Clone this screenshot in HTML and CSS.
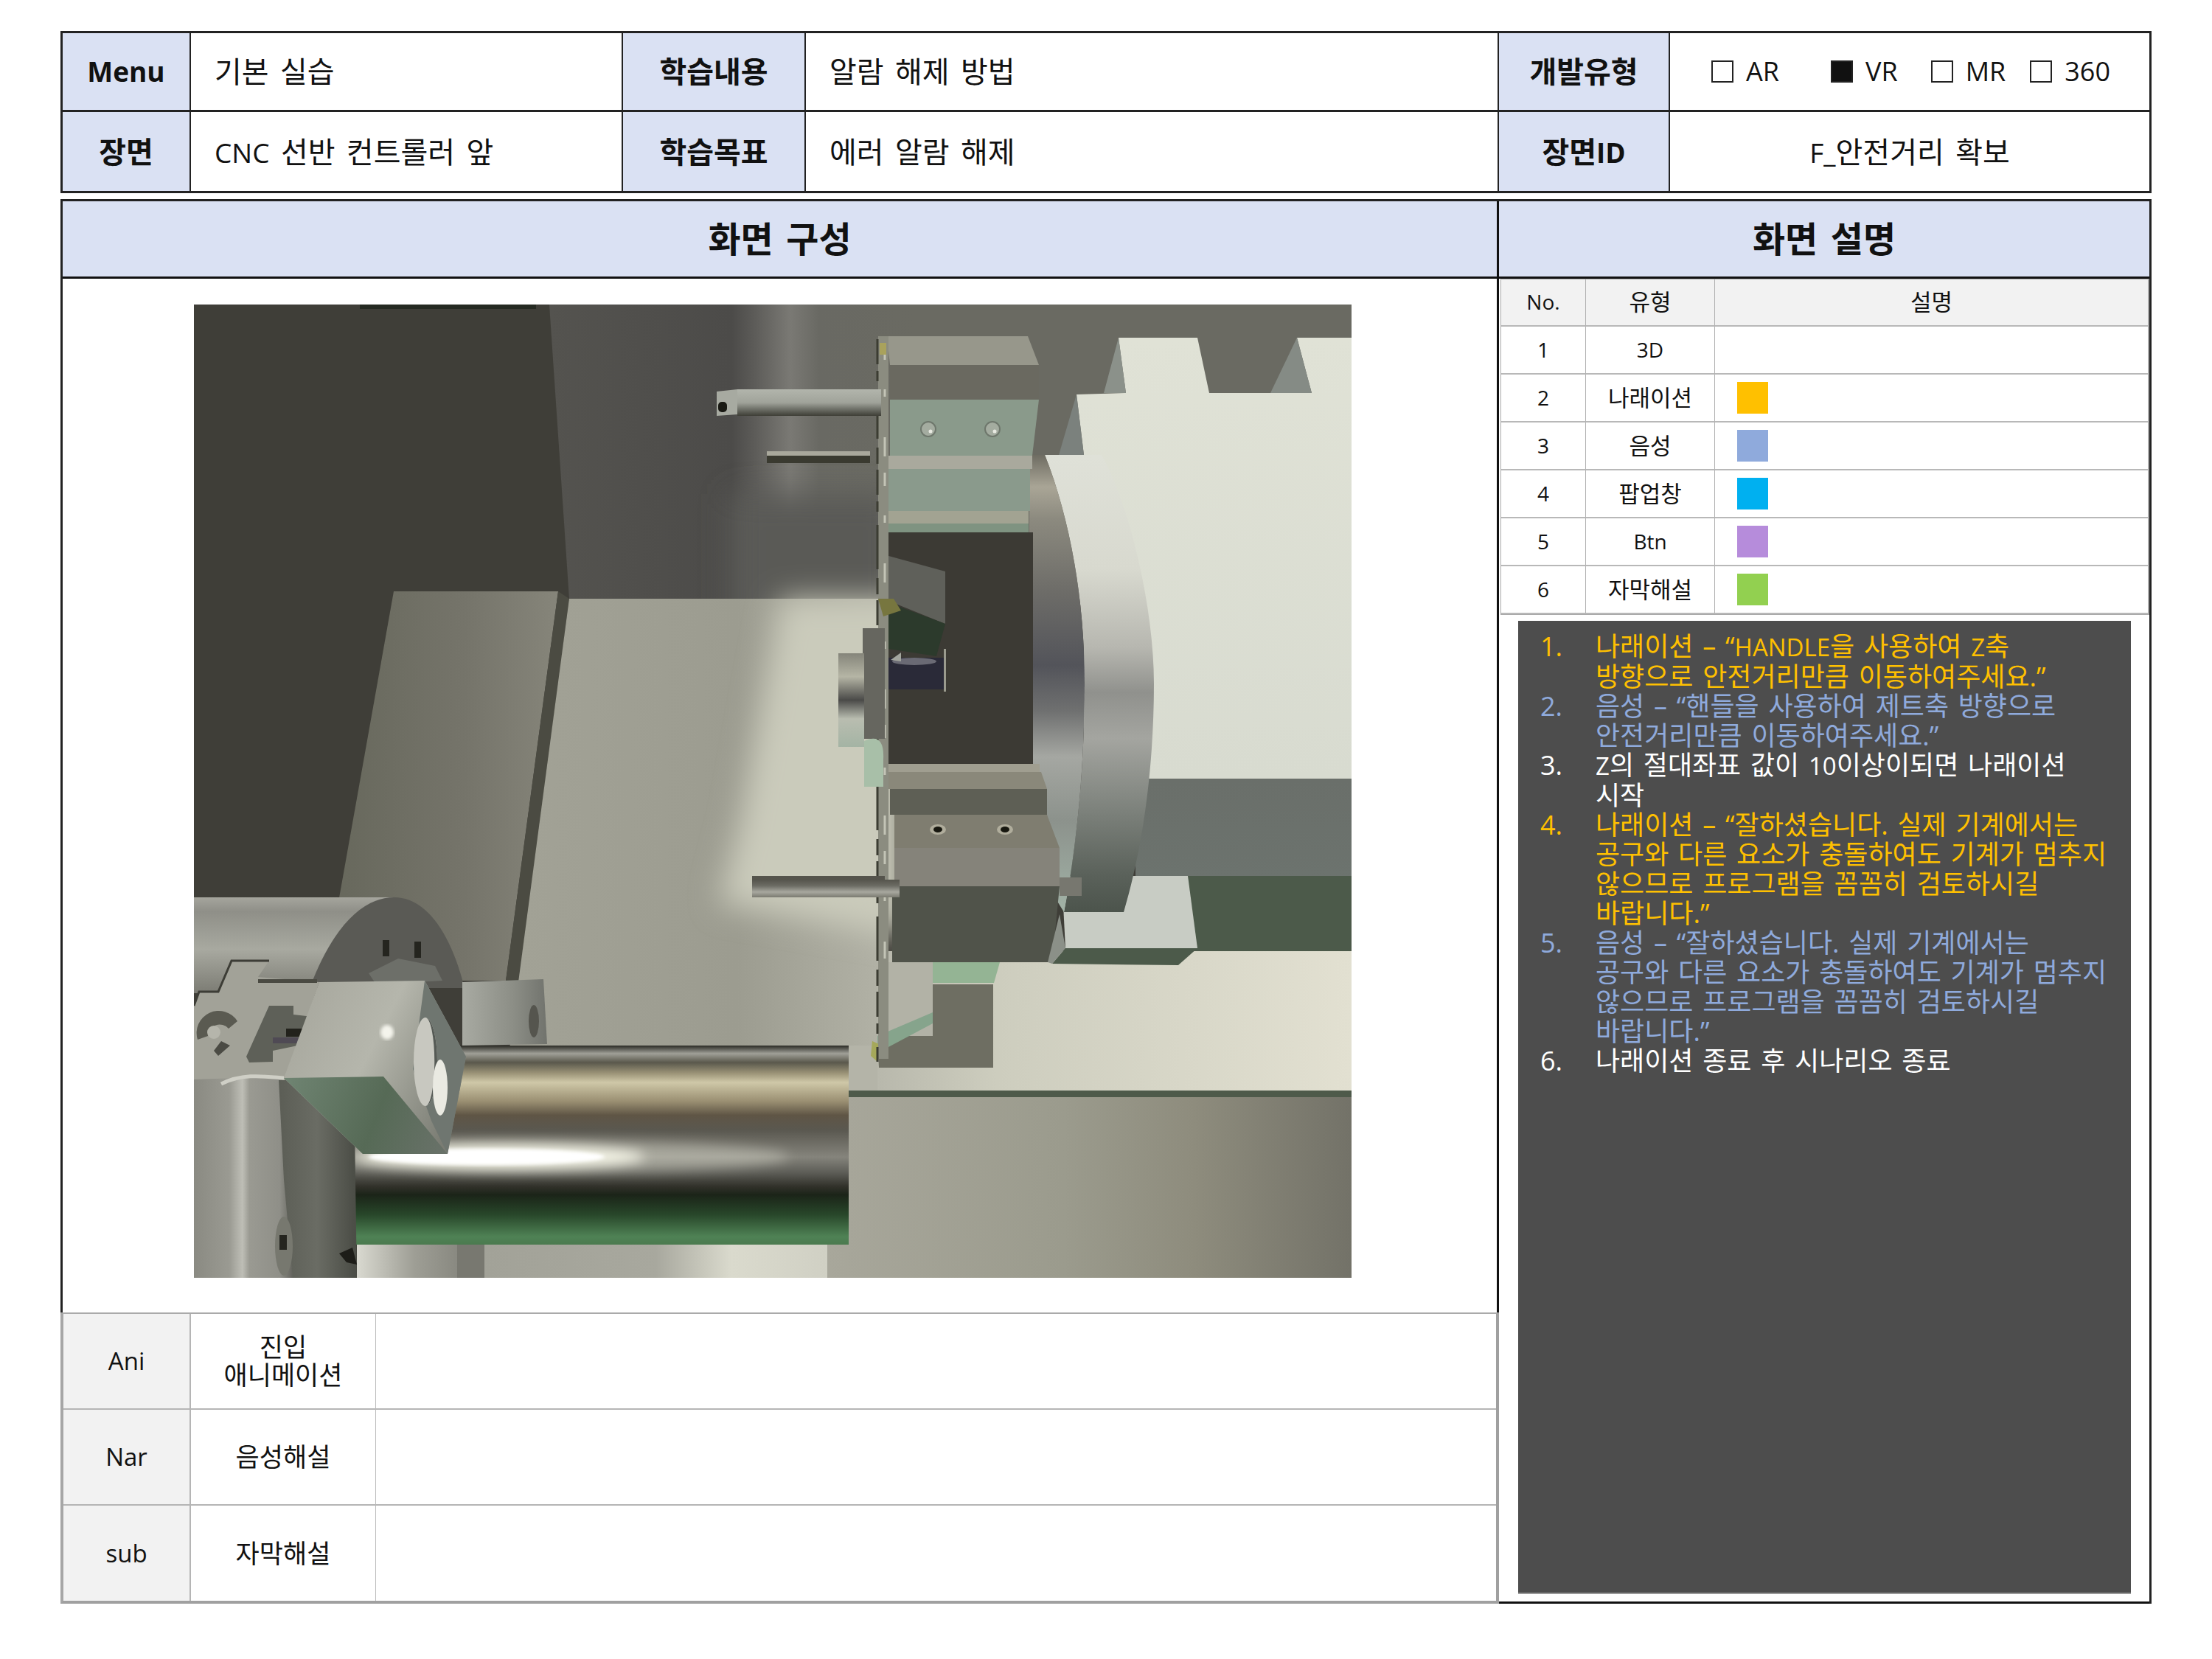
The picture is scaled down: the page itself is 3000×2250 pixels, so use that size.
FILE: index.html
```html
<!DOCTYPE html>
<html lang="ko">
<head>
<meta charset="utf-8">
<title>화면 설계</title>
<link rel="stylesheet" href="styles.css">
</head>
<body>
<div class="page">
  <section class="meta">
    <div class="c head"><span class="lat-b">Menu</span></div>
    <div class="c val"><span>기본 실습</span></div>
    <div class="c head">학습내용</div>
    <div class="c val"><span>알람 해제 방법</span></div>
    <div class="c head">개발유형</div>
    <div class="c types">
      <span class="box"></span><span class="t t-ar">AR</span>
      <span class="box on"></span><span class="t t-vr">VR</span>
      <span class="box"></span><span class="t t-mr">MR</span>
      <span class="box"></span><span class="t">360</span>
    </div>
    <div class="c head">장면</div>
    <div class="c val"><span><span class="lat">CNC</span> 선반 컨트롤러 앞</span></div>
    <div class="c head">학습목표</div>
    <div class="c val"><span>에러 알람 해제</span></div>
    <div class="c head"><span>장면<span class="lat-b">ID</span></span></div>
    <div class="c val center"><span><span class="lat">F_</span>안전거리 확보</span></div>
  </section>

  <section class="main">
    <h2 class="title left">화면 구성</h2>
    <h2 class="title right">화면 설명</h2>

    <div class="col-left">
      <div class="shot">
        <svg class="scene" viewBox="263 413 1570 1320" width="1570" height="1320" xmlns="http://www.w3.org/2000/svg" role="img" aria-label="CNC 선반 3D 화면">
          <defs>
            <filter id="b2"><feGaussianBlur stdDeviation="2"/></filter>
            <filter id="b8" x="-20%" y="-200%" width="140%" height="500%"><feGaussianBlur stdDeviation="8"/></filter>
            <filter id="b20" x="-30%" y="-30%" width="160%" height="160%"><feGaussianBlur stdDeviation="20"/></filter>
            <clipPath id="sceneClip"><rect x="263" y="413" width="1570" height="1320"/></clipPath>
            <linearGradient id="wall" x1="745" x2="1240" y1="0" y2="0" gradientUnits="userSpaceOnUse">
              <stop offset="0" stop-color="#54534f"/><stop offset=".5" stop-color="#4c4b49"/><stop offset=".56" stop-color="#5c5b58"/><stop offset=".66" stop-color="#7a7974"/><stop offset=".74" stop-color="#696963"/><stop offset="1" stop-color="#6a6a62"/>
            </linearGradient>
            <linearGradient id="panelA" x1="440" x2="757" y1="0" y2="0" gradientUnits="userSpaceOnUse">
              <stop offset="0" stop-color="#66675b"/><stop offset=".6" stop-color="#75746a"/><stop offset="1" stop-color="#86857a"/>
            </linearGradient>
            <linearGradient id="panelB" x1="700" x2="1200" y1="0" y2="0" gradientUnits="userSpaceOnUse">
              <stop offset="0" stop-color="#a2a296"/><stop offset=".6" stop-color="#9c9c90"/><stop offset="1" stop-color="#b2b2a6"/>
            </linearGradient>
            <linearGradient id="bedTop" x1="1190" x2="1833" y1="0" y2="0" gradientUnits="userSpaceOnUse">
              <stop offset="0" stop-color="#b8b8ac"/><stop offset=".25" stop-color="#cdcdbe"/><stop offset="1" stop-color="#e2e0d1"/>
            </linearGradient>
            <linearGradient id="bedLow" x1="1122" x2="1833" y1="0" y2="0" gradientUnits="userSpaceOnUse">
              <stop offset="0" stop-color="#a8a79b"/><stop offset=".45" stop-color="#9b9b8d"/><stop offset=".7" stop-color="#8e8c7d"/><stop offset="1" stop-color="#737268"/>
            </linearGradient>
            <linearGradient id="strip" x1="657" x2="1122" y1="0" y2="0" gradientUnits="userSpaceOnUse">
              <stop offset="0" stop-color="#a2a298"/><stop offset=".5" stop-color="#a8a89e"/><stop offset=".72" stop-color="#dadacd"/><stop offset="1" stop-color="#d0d0c4"/>
            </linearGradient>
            <linearGradient id="shaft" x1="0" x2="0" y1="1418" y2="1688" gradientUnits="userSpaceOnUse">
              <stop offset="0" stop-color="#2b2b25"/><stop offset=".04" stop-color="#a0a098"/><stop offset=".085" stop-color="#5a584c"/><stop offset=".14" stop-color="#9c9478"/><stop offset=".185" stop-color="#cfc8a8"/><stop offset=".28" stop-color="#9a8f72"/><stop offset=".35" stop-color="#5f5545"/><stop offset=".425" stop-color="#5a5850"/><stop offset=".56" stop-color="#85847c"/><stop offset=".64" stop-color="#5c5c56"/><stop offset=".71" stop-color="#303029"/><stop offset=".75" stop-color="#1b2418"/><stop offset=".85" stop-color="#28472a"/><stop offset=".96" stop-color="#4f8255"/><stop offset="1" stop-color="#4b7a4f"/>
            </linearGradient>
            <linearGradient id="disc" x1="0" x2="0" y1="617" y2="1237" gradientUnits="userSpaceOnUse">
              <stop offset="0" stop-color="#dfe1d8"/><stop offset=".25" stop-color="#d8d9cf"/><stop offset=".42" stop-color="#b7b7b0"/><stop offset=".52" stop-color="#90918d"/><stop offset=".62" stop-color="#a4a5a0"/><stop offset=".78" stop-color="#7c817b"/><stop offset=".92" stop-color="#5a615a"/><stop offset="1" stop-color="#4c544c"/>
            </linearGradient>
            <linearGradient id="ring" x1="0" x2="0" y1="617" y2="1237" gradientUnits="userSpaceOnUse">
              <stop offset="0" stop-color="#6e6c62"/><stop offset=".07" stop-color="#a9a596"/><stop offset=".14" stop-color="#8c8a7f"/><stop offset=".3" stop-color="#6d6c68"/><stop offset=".46" stop-color="#53545a"/><stop offset=".56" stop-color="#6f7070"/><stop offset=".66" stop-color="#a5a7a2"/><stop offset=".8" stop-color="#8c928c"/><stop offset="1" stop-color="#a2b3a7"/>
            </linearGradient>
            <linearGradient id="rod" x1="0" x2="0" y1="0" y2="1">
              <stop offset="0" stop-color="#b2b5ac"/><stop offset=".5" stop-color="#a0a39a"/><stop offset=".75" stop-color="#6e7068"/><stop offset="1" stop-color="#3e3e36"/>
            </linearGradient>
            <linearGradient id="rodLow" x1="0" x2="0" y1="0" y2="1">
              <stop offset="0" stop-color="#55544c"/><stop offset=".35" stop-color="#6c6c64"/><stop offset=".7" stop-color="#a8a89f"/><stop offset="1" stop-color="#7a7a70"/>
            </linearGradient>
            <linearGradient id="hub" x1="0" x2="0" y1="0" y2="1">
              <stop offset="0" stop-color="#85857a"/><stop offset=".25" stop-color="#b5b5a5"/><stop offset=".5" stop-color="#4a4a48"/><stop offset=".7" stop-color="#b9bdb0"/><stop offset="1" stop-color="#a4b4a4"/>
            </linearGradient>
            <linearGradient id="cyl" x1="0" x2="0" y1="1217" y2="1345" gradientUnits="userSpaceOnUse">
              <stop offset="0" stop-color="#a5a59d"/><stop offset=".15" stop-color="#8f8f88"/><stop offset=".55" stop-color="#a8a9a0"/><stop offset="1" stop-color="#7d7d75"/>
            </linearGradient>
            <linearGradient id="jawTop" x1="385" x2="640" y1="1340" y2="1470" gradientUnits="userSpaceOnUse">
              <stop offset="0" stop-color="#a5a59b"/><stop offset=".5" stop-color="#b5b6ac"/><stop offset="1" stop-color="#7a7c73"/>
            </linearGradient>
            <linearGradient id="jawLow" x1="385" x2="610" y1="1470" y2="1560" gradientUnits="userSpaceOnUse">
              <stop offset="0" stop-color="#6f8472"/><stop offset=".55" stop-color="#566a56"/><stop offset="1" stop-color="#6a726a"/>
            </linearGradient>
            <linearGradient id="jawR" x1="627" x2="742" y1="0" y2="0" gradientUnits="userSpaceOnUse">
              <stop offset="0" stop-color="#a8aaa2"/><stop offset=".6" stop-color="#8c8e86"/><stop offset="1" stop-color="#71736d"/>
            </linearGradient>
            <linearGradient id="body" x1="263" x2="400" y1="0" y2="0" gradientUnits="userSpaceOnUse">
              <stop offset="0" stop-color="#8a8a82"/><stop offset=".35" stop-color="#9a9a92"/><stop offset=".48" stop-color="#bebeb6"/><stop offset=".55" stop-color="#9a9a92"/><stop offset=".85" stop-color="#8f8f88"/><stop offset="1" stop-color="#5c5c56"/>
            </linearGradient>
            <linearGradient id="ringLow" x1="380" x2="480" y1="0" y2="0" gradientUnits="userSpaceOnUse">
              <stop offset="0" stop-color="#5c5e56"/><stop offset=".5" stop-color="#6a6c64"/><stop offset="1" stop-color="#4c4e47"/>
            </linearGradient>
            <linearGradient id="foot" x1="484" x2="640" y1="0" y2="0" gradientUnits="userSpaceOnUse">
              <stop offset="0" stop-color="#d9d9d0"/><stop offset=".5" stop-color="#9e9e95"/><stop offset="1" stop-color="#82827a"/>
            </linearGradient>
            <linearGradient id="tail" x1="0" x2="0" y1="458" y2="1056" gradientUnits="userSpaceOnUse">
              <stop offset="0" stop-color="#e0e2d6"/><stop offset="1" stop-color="#d8dbd0"/>
            </linearGradient>
            <linearGradient id="under" x1="0" x2="0" y1="1056" y2="1190" gradientUnits="userSpaceOnUse">
              <stop offset="0" stop-color="#6a6f6a"/><stop offset="1" stop-color="#6c736e"/>
            </linearGradient>
          </defs>

          <g clip-path="url(#sceneClip)">
          <!-- wall and bed -->
          <rect x="263" y="413" width="1570" height="1320" fill="#3f3e38"/>
          <polygon points="745,413 1833,413 1833,812 772,812" fill="url(#wall)"/>
          <rect x="990" y="670" width="230" height="190" fill="#5a5a56" filter="url(#b20)"/>
          <rect x="488" y="413" width="239" height="6" fill="#252a22"/>
          <polygon points="534,802 757,802 686,1330 440,1330" fill="url(#panelA)"/>
          <polygon points="757,802 772,812 705,1330 686,1330" fill="#4b4b42"/>
          <polygon points="772,812 1200,812 1200,1430 690,1430" fill="url(#panelB)"/>
          <polygon points="1060,812 1230,812 1230,1270 975,1225 1005,1110" fill="#cacbbb" filter="url(#b20)"/>
          <rect x="1151" y="1418" width="60" height="61" fill="#b4b4a8"/>
          <rect x="1190" y="1290" width="643" height="189" fill="url(#bedTop)"/>
          <rect x="1151" y="1479" width="682" height="9" fill="#4e5a4a"/>
          <rect x="1151" y="1488" width="682" height="200" fill="url(#bedLow)"/>
          <rect x="1122" y="1688" width="711" height="45" fill="url(#bedLow)"/>
          <rect x="657" y="1688" width="465" height="45" fill="url(#strip)"/>

          <!-- tailstock -->
          <polygon points="1517,458 1624,458 1640,533 1779,533 1759,458 1833,458 1833,1056 1470,1056 1470,617 1460,535 1527,533" fill="url(#tail)"/>
          <polygon points="1517,458 1497,533 1527,533" fill="#8b918a"/>
          <polygon points="1759,458 1723,533 1779,533" fill="#858b85"/>
          <polygon points="1460,535 1436,617 1470,617" fill="#7b817d"/>
          <rect x="1540" y="1056" width="293" height="132" fill="url(#under)"/>
          <rect x="1600" y="1188" width="233" height="102" fill="#4c5a4a"/>
          <polygon points="1440,1188 1611,1188 1624,1286 1445,1286" fill="#c8ccc4"/>
          <polygon points="1427,1307 1445,1286 1624,1286 1598,1309" fill="#4c5a4a"/>

          <!-- chuck disc -->
          <path d="M1417 617 L1494 617 C1530 680 1565 820 1565 927 C1565 1040 1550 1150 1524 1237 L1443 1237 C1460 1150 1471 1040 1471 927 C1471 810 1450 700 1417 617Z" fill="url(#disc)"/>
          <path d="M1397 617 L1417 617 C1450 700 1471 810 1471 927 C1471 1040 1460 1150 1443 1237 L1420 1200 L1400 1050 L1395 800Z" fill="url(#ring)"/>

          <!-- turret -->
          <polygon points="1203,456 1394,456 1409,495 1207,495" fill="#97978b"/>
          <polygon points="1207,495 1409,495 1409,542 1207,542" fill="#6a6960"/>
          <polygon points="1207,542 1409,542 1400,618 1207,618" fill="#8a9a8b"/>
          <rect x="1205" y="618" width="195" height="18" fill="#a9a99d"/>
          <rect x="1205" y="636" width="192" height="57" fill="#8a9a8c"/>
          <rect x="1205" y="693" width="190" height="17" fill="#a2a392"/>
          <rect x="1205" y="710" width="190" height="12" fill="#7f9381"/>
          <rect x="1205" y="722" width="196" height="314" fill="#3c3a34"/>
          <circle cx="1259" cy="582" r="10" fill="#a4aca0" stroke="#6e776c" stroke-width="2"/>
          <circle cx="1346" cy="582" r="10" fill="#a4aca0" stroke="#6e776c" stroke-width="2"/>
          <circle cx="1262" cy="585" r="2.5" fill="#e8eae2"/>
          <circle cx="1349" cy="585" r="2.5" fill="#e8eae2"/>
          <polygon points="1198,752 1282,775 1282,846 1198,812" fill="#5f605a"/>
          <polygon points="1198,815 1282,846 1270,890 1205,880" fill="#2c3a2c"/>
          <rect x="1205" y="892" width="75" height="43" fill="#2a2a38"/>
          <rect x="1280" y="880" width="3" height="58" fill="#9a9a8e"/>
          <ellipse cx="1240" cy="897" rx="30" ry="5" fill="#6a6a74"/>
          <polygon points="1208,895 1222,885 1222,897" fill="#a3a69e"/>
          <rect x="1205" y="1036" width="205" height="11" fill="#a09e90"/>
          <polygon points="1205,1047 1412,1047 1420,1070 1205,1070" fill="#8a887a"/>
          <polygon points="1207,1070 1420,1070 1420,1105 1207,1105" fill="#5e5f55"/>
          <polygon points="1213,1105 1420,1105 1437,1150 1213,1150" fill="#7f7d70"/>
          <polygon points="1213,1150 1437,1150 1437,1202 1213,1202" fill="#85837a"/>
          <polygon points="1210,1202 1437,1202 1427,1305 1210,1305" fill="#50534a"/>
          <ellipse cx="1272" cy="1125" rx="11" ry="7" fill="#b0ad9c"/>
          <ellipse cx="1363" cy="1125" rx="11" ry="7" fill="#b0ad9c"/>
          <ellipse cx="1272" cy="1125" rx="6" ry="4" fill="#17170f"/>
          <ellipse cx="1363" cy="1125" rx="6" ry="4" fill="#17170f"/>
          <rect x="1437" y="1190" width="30" height="25" fill="#77776f"/>
          <polygon points="1437,1240 1445,1286 1427,1307 1421,1305" fill="#8b9088"/>
          <polygon points="1265,1305 1356,1305 1348,1333 1265,1333" fill="#94b494"/>
          <polygon points="1265,1335 1347,1335 1347,1448 1192,1448 1190,1410 1265,1372" fill="#6e6e62"/>
          <rect x="1190" y="1305" width="75" height="100" fill="#b2b2a6"/>
          <polygon points="1190,1405 1265,1373 1265,1388 1190,1428" fill="#86a48c"/>
          <polygon points="1183,1412 1192,1416 1190,1440 1181,1432" fill="#a5a85a"/>

          <!-- turret edge -->
          <rect x="1191" y="456" width="14" height="980" fill="#8b8c80"/>
          <path d="M1190 460 V1440" stroke="#3c3d33" stroke-width="3" stroke-dasharray="34 9 14 18 60 12 22 8" fill="none"/>
          <path d="M1200 470 V1300" stroke="#c3c4b6" stroke-width="3" stroke-dasharray="18 40 10 55 26 22" fill="none"/>
          <rect x="1193" y="465" width="9" height="16" fill="#a9a25c"/>
          <polygon points="1191,812 1212,812 1222,828 1198,836" fill="#77763f"/>

          <!-- hub on the turret -->
          <rect x="1170" y="852" width="30" height="150" fill="#66665f"/>
          <path d="M1172 1005 Q1200 992 1198 1030 L1198 1067 L1172 1067Z" fill="#a8bfa8"/>
          <rect x="1137" y="886" width="35" height="127" fill="url(#hub)"/>

          <!-- tools -->
          <rect x="1000" y="528" width="195" height="36" fill="url(#rod)"/>
          <polygon points="972,531 1000,528 1000,562 972,564" fill="#a7aaa1"/>
          <rect x="974" y="545" width="12" height="14" rx="5" fill="#191913"/>
          <rect x="1040" y="612" width="140" height="7" fill="#a9a89c"/>
          <rect x="1040" y="618" width="140" height="10" fill="#3a3a30"/>
          <rect x="1020" y="1188" width="180" height="5" fill="#55544c"/>
          <rect x="1020" y="1193" width="200" height="24" fill="url(#rodLow)"/>

          <!-- spindle shaft -->
          <rect x="464" y="1418" width="687" height="270" fill="url(#shaft)"/>
          <ellipse cx="740" cy="1569" rx="330" ry="22" fill="#d8d8ca" opacity=".45" filter="url(#b8)"/>
          <ellipse cx="680" cy="1569" rx="195" ry="16" fill="#f4f4e6" filter="url(#b8)"/>
          <ellipse cx="660" cy="1569" rx="160" ry="11" fill="#ffffff" filter="url(#b2)"/>

          <!-- chuck -->
          <rect x="263" y="1217" width="270" height="130" fill="url(#cyl)"/>
          <path d="M420 1340 C450 1260 490 1217 535 1217 C575 1217 610 1260 630 1340Z" fill="#5a5a55"/>
          <rect x="519" y="1275" width="9" height="22" fill="#25251f"/>
          <rect x="562" y="1277" width="9" height="22" fill="#25251f"/>
          <path d="M500 1320 L540 1300 L590 1310 L600 1330 L510 1335Z" fill="#72746e" opacity=".8"/>
          <polygon points="263,1364 270,1345 296,1345 314,1303 365,1303 350,1325 433,1332 385,1470 263,1470" fill="#a2a298"/>
          <path d="M263 1364 L270 1345 L296 1345 L314 1303 L365 1303" fill="none" stroke="#3d3d36" stroke-width="3"/>
          <rect x="350" y="1328" width="80" height="5" fill="#4a4a42"/>
          <path d="M268 1410 A30 30 0 0 1 322 1385 L310 1395 A16 16 0 0 0 282 1405Z" fill="#5a5a51"/>
          <circle cx="290" cy="1400" r="9" fill="#b5b5ab"/>
          <polygon points="290,1425 300,1412 312,1418 296,1432" fill="#4b4b44"/>
          <polygon points="334,1433 365,1364 398,1364 398,1376 433,1380 423,1414 370,1425 370,1440 338,1441" fill="#5e6058"/>
          <rect x="388" y="1395" width="30" height="11" fill="#22221c"/>
          <rect x="370" y="1407" width="50" height="8" fill="#4f4a54"/>

          <polygon points="627,1332 737,1328 742,1416 627,1418" fill="url(#jawR)"/>
          <ellipse cx="724" cy="1385" rx="7" ry="22" fill="#55554e"/>

          <polygon points="263,1464 380,1460 395,1480 400,1733 263,1733" fill="url(#body)"/>
          <polygon points="378,1465 480,1465 484,1733 397,1733 385,1600" fill="url(#ringLow)"/>
          <ellipse cx="385" cy="1690" rx="12" ry="40" fill="#77786f"/>
          <rect x="379" y="1675" width="10" height="20" fill="#25251f"/>
          <polygon points="460,1700 478,1692 484,1715 470,1712" fill="#1d1d18"/>
          <path d="M300 1470 C330 1455 360 1460 385 1462" stroke="#cfcfc6" stroke-width="5" fill="none"/>
          <rect x="484" y="1688" width="136" height="45" fill="url(#foot)"/>
          <rect x="620" y="1688" width="37" height="45" fill="#787870"/>

          <polygon points="433,1332 576,1330 632,1433 607,1565 492,1565 385,1462" fill="url(#jawTop)"/>
          <polygon points="385,1462 520,1460 607,1565 492,1565" fill="url(#jawLow)"/>
          <ellipse cx="525" cy="1400" rx="9" ry="10" fill="#f4f4ec" filter="url(#b2)"/>
          <path d="M576 1330 L632 1433 L607 1565 L585 1520 L560 1450Z" fill="#6f7670"/>
          <ellipse cx="577" cy="1440" rx="16" ry="60" fill="#c8c8c0"/>
          <path d="M577 1380 A16 60 0 0 1 577 1500 A9 44 0 0 0 577 1380Z" fill="#555a55"/>
          <ellipse cx="597" cy="1475" rx="10" ry="38" fill="#eaeae2"/>
          </g>
        </svg>
      </div>

      <div class="notes">
        <div class="n-key">Ani</div>
        <div class="n-name">진입<br>애니메이션</div>
        <div class="n-body"></div>
        <div class="n-key">Nar</div>
        <div class="n-name">음성해설</div>
        <div class="n-body"></div>
        <div class="n-key">sub</div>
        <div class="n-name">자막해설</div>
        <div class="n-body"></div>
      </div>
    </div>

    <div class="col-right">
      <div class="legend">
        <div class="l-h"><span class="lat-s">No.</span></div><div class="l-h">유형</div><div class="l-h">설명</div>
        <div class="l-c"><span class="lat-s">1</span></div><div class="l-c"><span class="lat-s">3D</span></div><div class="l-c l-sw"></div>
        <div class="l-c"><span class="lat-s">2</span></div><div class="l-c">나래이션</div><div class="l-c l-sw"><i class="sw sw-nar"></i></div>
        <div class="l-c"><span class="lat-s">3</span></div><div class="l-c">음성</div><div class="l-c l-sw"><i class="sw sw-voice"></i></div>
        <div class="l-c"><span class="lat-s">4</span></div><div class="l-c">팝업창</div><div class="l-c l-sw"><i class="sw sw-popup"></i></div>
        <div class="l-c"><span class="lat-s">5</span></div><div class="l-c"><span class="lat-s">Btn</span></div><div class="l-c l-sw"><i class="sw sw-btn"></i></div>
        <div class="l-c"><span class="lat-s">6</span></div><div class="l-c">자막해설</div><div class="l-c l-sw"><i class="sw sw-sub"></i></div>
      </div>

      <ol class="steps">
        <li class="amber"><span class="num">1.</span><span>나래이션 – “<span class="lat-l">HANDLE</span>을 사용하여 <span class="lat-l">Z</span>축<br>방향으로 안전거리만큼 이동하여주세요.”</span></li>
        <li class="blue"><span class="num">2.</span><span>음성 – “핸들을 사용하여 제트축 방향으로<br>안전거리만큼 이동하여주세요.”</span></li>
        <li class="white"><span class="num">3.</span><span><span class="lat-l">Z</span>의 절대좌표 값이 <span class="lat-l">10</span>이상이되면 나래이션<br>시작</span></li>
        <li class="amber"><span class="num">4.</span><span>나래이션 – “잘하셨습니다. 실제 기계에서는<br>공구와 다른 요소가 충돌하여도 기계가 멈추지<br>않으므로 프로그램을 꼼꼼히 검토하시길<br>바랍니다.”</span></li>
        <li class="blue"><span class="num">5.</span><span>음성 – “잘하셨습니다. 실제 기계에서는<br>공구와 다른 요소가 충돌하여도 기계가 멈추지<br>않으므로 프로그램을 꼼꼼히 검토하시길<br>바랍니다.”</span></li>
        <li class="white"><span class="num">6.</span><span>나래이션 종료 후 시나리오 종료</span></li>
      </ol>
    </div>
  </section>
</div>
</body>
</html>
```

FILE: styles.css
```css
* { box-sizing: border-box; }

html, body { margin: 0; padding: 0; background: #fff; }

body {
  font-family: "Open Sans", "Noto Sans CJK KR", sans-serif;
  color: #111;
}

.page {
  width: 2836px;
  margin: 42px 0 0 82px;
  display: flex;
  flex-direction: column;
  gap: 8px;
}

.lat { font-size: 37px; }
.lat-b { font-size: 37px; font-weight: 700; }
.lat-s { font-size: 28px; }
.lat-l { font-size: 33px; }

/* top info table */
.meta {
  display: grid;
  grid-template-columns: 174px 586px 248px 940px 232px 650px;
  grid-template-rows: 107px 107px;
  border: 3px solid #222;
}

.c {
  display: flex;
  align-items: center;
  font-size: 40px;
  line-height: 1.2;
  word-spacing: 5px;
  border-right: 2px solid #222;
  border-bottom: 3px solid #222;
}

.c:nth-child(6n) { border-right: 0; }
.c:nth-child(n+7) { border-bottom: 0; }

.head {
  justify-content: center;
  background: #dae1f3;
  font-weight: 700;
}

.val { padding-left: 32px; }

.val.center { justify-content: center; padding-left: 0; }

.types { font-size: 36px; padding-left: 56px; }

.box {
  width: 30px;
  height: 30px;
  border: 2px solid #222;
  margin-right: 17px;
}

.box.on { background: #111; }

.t-ar { margin-right: 70px; }
.t-vr { margin-right: 45px; }
.t-mr { margin-right: 33px; }

/* main table */
.main {
  display: grid;
  grid-template-columns: 1948px 882px;
  grid-template-rows: 105px 1797px;
  border-top: 3px solid #222;
  border-left: 3px solid #222;
  border-right: 3px solid #222;
}

.title {
  margin: 0;
  display: flex;
  align-items: center;
  justify-content: center;
  background: #dae1f3;
  font-size: 48px;
  font-weight: 700;
  line-height: 1.2;
  word-spacing: 5px;
  border-bottom: 3px solid #111;
}

.title.left { border-right: 3px solid #111; }

.col-left {
  display: flex;
  flex-direction: column;
  border-right: 3px solid #111;
}

.shot {
  flex: 1;
  padding: 35px 0 0 178px;
}

.scene { display: block; }

.notes {
  display: grid;
  grid-template-columns: 173px 251px 1fr;
  grid-template-rows: 130px 130px 129px;
  margin: 0 -3px;
  border-top: 2px solid #aaa;
  border-left: 4px solid #a6a6a6;
  border-right: 4px solid #a0a0a0;
  border-bottom: 4px solid #a0a0a0;
}

.n-key, .n-name, .n-body {
  display: flex;
  align-items: center;
  justify-content: center;
  text-align: center;
  font-size: 35px;
  line-height: 38px;
  border-bottom: 2px solid #b5b5b5;
  border-right: 1px solid #bbb;
}

.n-body { border-right: 0; }

.n-key { background: #f2f2f2; font-size: 33px; border-right: 2px solid #b5b5b5; }

.notes > :nth-last-child(-n+3) { border-bottom: 0; }

.col-right {
  display: flex;
  flex-direction: column;
  padding-left: 2px;
  border-bottom: 3px solid #111;
}

.legend {
  display: grid;
  grid-template-columns: 115px 175px 1fr;
  grid-template-rows: 64px repeat(6, 65px);
  border: 1px solid #aaa;
  border-right-width: 2px;
}

.l-h, .l-c {
  display: flex;
  align-items: center;
  justify-content: center;
  font-size: 31px;
  line-height: 1.2;
  border-bottom: 2px solid #b8b8b8;
  border-right: 1px solid #b0b0b0;
}

.l-h { background: #f2f2f2; }

.legend > :nth-child(3n) { border-right: 0; }

.l-sw { justify-content: flex-start; padding-left: 30px; }

.sw { display: block; width: 42px; height: 43px; }
.sw-nar { background: #ffc000; }
.sw-voice { background: #8faadc; }
.sw-popup { background: #00b0f0; }
.sw-btn { background: #b68cdb; }
.sw-sub { background: #92d050; }

.steps {
  list-style: none;
  margin: 8px 25px 10px 24px;
  padding: 15px 20px 0 30px;
  flex: 1;
  background: #4d4d4d;
  border-bottom: 2px solid #999;
  font-size: 36px;
  line-height: 40px;
  word-spacing: 3.4px;
}

.steps li { display: flex; }

.num { width: 75px; flex: none; }

.amber { color: #ffc000; }
.blue { color: #8faadc; }
.white { color: #fff; }
```
